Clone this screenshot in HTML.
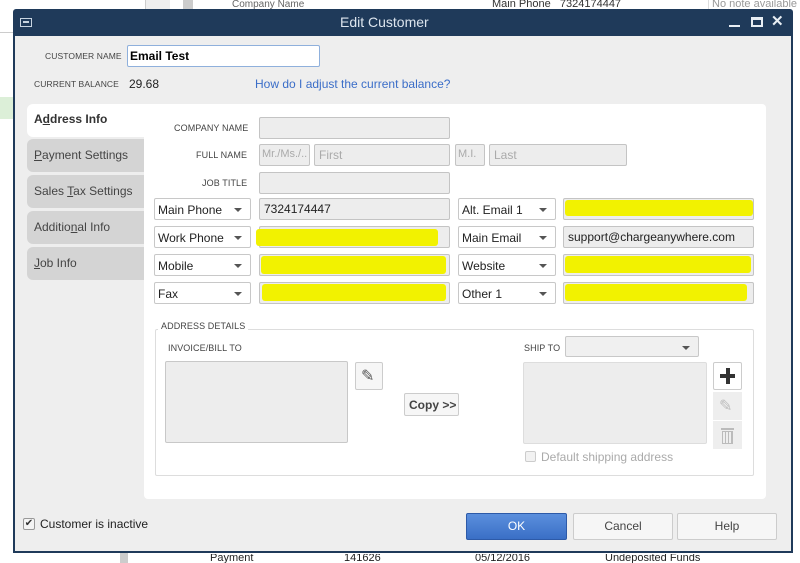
<!DOCTYPE html>
<html><head><meta charset="utf-8"><style>
*{box-sizing:border-box;margin:0;padding:0}
body{width:800px;height:563px;overflow:hidden;background:#fff;font-family:"Liberation Sans",sans-serif;position:relative}
.a{position:absolute}
.lbl{position:absolute;font-size:9px;color:#444;letter-spacing:.1px}
.in{position:absolute;background:#ededed;border:1px solid #c4c4c4;border-radius:2px;font-size:12px;color:#222;padding:3px 4px;height:22px}
.ph{color:#aaa}
.dd{position:absolute;background:#fff;border:1px solid #c8c8c8;border-radius:2px;font-size:12px;color:#222;padding:4px 3px;height:22px}
.dd:after{content:"";position:absolute;right:8px;top:9px;border-left:4px solid transparent;border-right:4px solid transparent;border-top:4px solid #555}
.yl{position:absolute;background:#f2f200;border-radius:3px}
.tab{position:absolute;left:27px;width:118px;background:#d4d4d4;border-radius:6px 0 0 6px;font-size:12px;color:#444;padding-left:7px;line-height:33px;height:33px}
.btn{position:absolute;background:#f6f6f6;border:1px solid #ccc;border-radius:2px}
</style></head><body>
<div class="a" style="left:0;top:32px;width:13px;height:1px;background:#ccc"></div>
<div class="a" style="left:0;top:97px;width:13px;height:22px;background:#dcefd8"></div>
<div class="a" style="left:145px;top:0;width:25px;height:9px;background:#eee;border-left:1px solid #ccc"></div>
<div class="a" style="left:183px;top:0;width:10px;height:9px;background:#ccc"></div>
<div class="a" style="left:232px;top:0;font-size:10px;color:#666;line-height:9px;height:9px;overflow:hidden">Company Name</div>
<div class="a" style="left:492px;top:0;font-size:11px;color:#333;line-height:9px;height:9px;overflow:hidden">Main Phone &nbsp; 7324174447</div>
<div class="a" style="left:708px;top:0;width:92px;font-size:11px;color:#999;line-height:9px;height:9px;overflow:hidden;border-left:1px solid #ddd;padding-left:3px">No note available</div>
<div class="a" style="left:0;top:552px;width:800px;height:11px;background:#fff"></div>
<div class="a" style="left:120px;top:552px;width:8px;height:11px;background:#ccc"></div>
<div class="a" style="left:210px;top:554px;font-size:11px;color:#222;line-height:9px;height:9px;overflow:hidden;width:600px">Payment<span style="position:absolute;left:134px">141626</span><span style="position:absolute;left:265px">05/12/2016</span><span style="position:absolute;left:395px">Undeposited Funds</span></div>

<div class="a" style="left:13px;top:9px;width:780px;height:544px;background:#1f3a5a;border-radius:3px 3px 0 0"></div>
<div class="a" style="left:15px;top:36px;width:776px;height:515px;background:#eeeeee"></div>
<div class="a" style="left:20px;top:18px;width:12px;height:9px;border:1px solid #c8d4e0"></div>
<div class="a" style="left:23px;top:21px;width:6px;height:2px;background:#c8d4e0"></div>
<div class="a" style="left:340px;top:14px;font-size:14px;color:#dde5ee">Edit Customer</div>
<div class="a" style="left:729px;top:25px;width:11px;height:2px;background:#e8eef4"></div>
<div class="a" style="left:751px;top:17px;width:12px;height:10px;border:2px solid #e8eef4;border-top-width:3px"></div>
<div class="a" style="left:771px;top:12px;font-size:15px;font-weight:bold;color:#e8eef4">✕</div>

<div class="lbl" style="left:45px;top:51px;font-size:8.5px">CUSTOMER NAME</div>
<div class="a" style="left:127px;top:45px;width:193px;height:22px;background:#fff;border:1px solid #8fb0dc;border-radius:2px;font-size:12px;font-weight:bold;padding:3px 2px">Email Test</div>
<div class="lbl" style="left:34px;top:79px;font-size:8.5px">CURRENT BALANCE</div>
<div class="a" style="left:129px;top:77px;font-size:12px;color:#222">29.68</div>
<div class="a" style="left:255px;top:77px;font-size:12px;color:#3a6dc8">How do I adjust the current balance?</div>

<div class="a" style="left:27px;top:104px;width:120px;height:33px;background:#fff;border-radius:6px 0 0 6px"></div>
<div class="a" style="left:34px;top:112px;font-size:12px;font-weight:bold;color:#333">A<u>d</u>dress Info</div>
<div class="tab" style="top:139px"><u>P</u>ayment Settings</div>
<div class="tab" style="top:175px">Sales <u>T</u>ax Settings</div>
<div class="tab" style="top:211px">Additio<u>n</u>al Info</div>
<div class="tab" style="top:247px"><u>J</u>ob Info</div>

<div class="a" style="left:144px;top:104px;width:622px;height:395px;background:#fff;border-radius:0 4px 4px 4px"></div>

<div class="lbl" style="left:174px;top:123px">COMPANY NAME</div>
<div class="in" style="left:259px;top:117px;width:191px"></div>
<div class="lbl" style="left:196px;top:150px">FULL NAME</div>
<div class="in ph" style="left:259px;top:144px;width:51px;font-size:11px;padding:3px 2px">Mr./Ms./..</div>
<div class="in ph" style="left:314px;top:144px;width:136px">First</div>
<div class="in ph" style="left:455px;top:144px;width:30px;font-size:11px;padding:3px 2px">M.I.</div>
<div class="in ph" style="left:489px;top:144px;width:138px">Last</div>
<div class="lbl" style="left:202px;top:178px">JOB TITLE</div>
<div class="in" style="left:259px;top:172px;width:191px"></div>

<div class="dd" style="left:154px;top:198px;width:97px">Main Phone</div>
<div class="in" style="left:259px;top:198px;width:191px">7324174447</div>
<div class="dd" style="left:458px;top:198px;width:98px">Alt. Email 1</div>
<div class="in" style="left:563px;top:198px;width:191px"></div>
<div class="yl" style="left:565px;top:200px;width:188px;height:16px"></div>

<div class="dd" style="left:154px;top:226px;width:97px">Work Phone</div>
<div class="in" style="left:259px;top:226px;width:191px"></div>
<div class="yl" style="left:256px;top:229px;width:182px;height:17px"></div>
<div class="dd" style="left:458px;top:226px;width:98px">Main Email</div>
<div class="in" style="left:563px;top:226px;width:191px">support@chargeanywhere.com</div>

<div class="dd" style="left:154px;top:254px;width:97px">Mobile</div>
<div class="in" style="left:259px;top:254px;width:191px"></div>
<div class="yl" style="left:261px;top:256px;width:185px;height:18px"></div>
<div class="dd" style="left:458px;top:254px;width:98px">Website</div>
<div class="in" style="left:563px;top:254px;width:191px"></div>
<div class="yl" style="left:565px;top:256px;width:186px;height:17px"></div>

<div class="dd" style="left:154px;top:282px;width:97px">Fax</div>
<div class="in" style="left:259px;top:282px;width:191px"></div>
<div class="yl" style="left:262px;top:284px;width:184px;height:17px"></div>
<div class="dd" style="left:458px;top:282px;width:98px">Other 1</div>
<div class="in" style="left:563px;top:282px;width:191px"></div>
<div class="yl" style="left:565px;top:284px;width:182px;height:17px"></div>

<div class="a" style="left:155px;top:329px;width:599px;height:147px;border:1px solid #ddd;border-radius:2px"></div>
<div class="lbl" style="left:158px;top:321px;background:#fff;padding:0 3px">ADDRESS DETAILS</div>
<div class="lbl" style="left:168px;top:343px">INVOICE/BILL TO</div>
<div class="a" style="left:165px;top:361px;width:183px;height:82px;background:#ededed;border:1px solid #c8c8c8;border-radius:2px"></div>
<div class="btn" style="left:355px;top:362px;width:28px;height:28px"></div>
<div class="a" style="left:361px;top:366px;font-size:16px;color:#555">✎</div>
<div class="btn" style="left:404px;top:393px;width:55px;height:23px;font-size:12px;font-weight:bold;color:#444;padding:4px 0 0 4px">Copy &gt;&gt;</div>
<div class="lbl" style="left:524px;top:343px">SHIP TO</div>
<div class="dd" style="left:565px;top:336px;width:134px;height:21px;background:#f0f0f0"></div>
<div class="a" style="left:523px;top:362px;width:184px;height:82px;background:#ededed;border:1px solid #ddd;border-radius:2px"></div>
<div class="btn" style="left:713px;top:362px;width:29px;height:28px;background:#fff"></div>
<div class="a" style="left:720px;top:374px;width:15px;height:4px;background:#333"></div>
<div class="a" style="left:726px;top:368px;width:4px;height:16px;background:#333"></div>
<div class="a" style="left:713px;top:392px;width:29px;height:28px;background:#eee"></div>
<div class="a" style="left:719px;top:396px;font-size:16px;color:#bbb">✎</div>
<div class="a" style="left:713px;top:421px;width:29px;height:28px;background:#eee"></div>
<div class="a" style="left:721px;top:428px;width:13px;height:2px;background:#bbb"></div>
<div class="a" style="left:722px;top:431px;width:11px;height:13px;border:1px solid #bbb;background:repeating-linear-gradient(90deg,#eee 0 2px,#bbb 2px 3px)"></div>
<div class="a" style="left:525px;top:451px;width:11px;height:11px;border:1px solid #ccc;background:#f2f2f2;border-radius:2px"></div>
<div class="a" style="left:541px;top:450px;font-size:12px;color:#aaa">Default shipping address</div>

<div class="a" style="left:23px;top:518px;width:12px;height:12px;border:1px solid #999;background:#f4f4f4;border-radius:2px;font-size:10px;line-height:10px;text-align:center;color:#333">✔</div>
<div class="a" style="left:40px;top:517px;font-size:12px;color:#222">Customer is inactive</div>
<div class="a" style="left:466px;top:513px;width:101px;height:27px;background:linear-gradient(#5b8fdd,#3a6fc6);border:1px solid #2d5aa8;border-radius:2px;color:#fff;font-size:12px;text-align:center;line-height:25px">OK</div>
<div class="btn" style="left:573px;top:513px;width:100px;height:27px;font-size:12px;color:#444;text-align:center;line-height:25px">Cancel</div>
<div class="btn" style="left:677px;top:513px;width:100px;height:27px;font-size:12px;color:#444;text-align:center;line-height:25px">Help</div>
</body></html>
